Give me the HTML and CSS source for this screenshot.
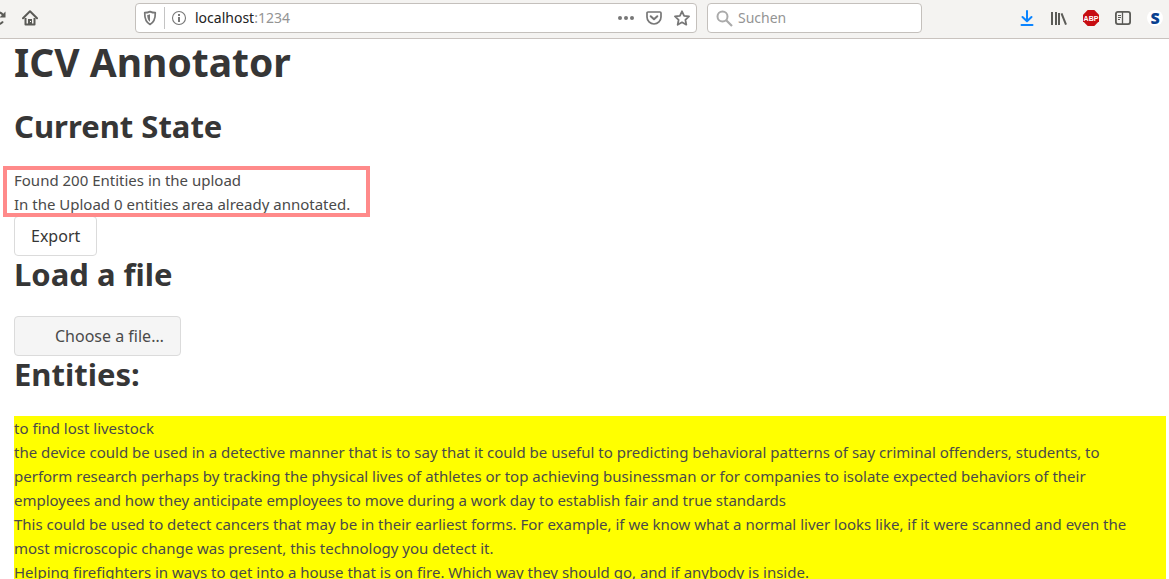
FILE: index.html
```
<!DOCTYPE html>
<html lang="en">
<head>
<meta charset="utf-8">
<title>ICV Annotator</title>
<link rel="stylesheet" href="styles.css">
</head>
<body>
<header class="toolbar">
  <button class="tool reload" aria-label="Reload"><svg width="16" height="16" viewBox="0 0 16 16" fill="none" stroke="#5b5b57" stroke-width="2"><path d="M13 11.500A6 6 0 1 1 13 5"/><path d="M15.500 1.500V7.500H9.500z" fill="#5b5b57" stroke="none"/></svg></button>
  <button class="tool home" aria-label="Home"><svg width="16" height="16" viewBox="0 0 16 16"><path d="M1 8.300L8 1.300l7 7" fill="none" stroke="#5b5b57" stroke-width="2" stroke-linecap="round" stroke-linejoin="round"/><path d="M3.500 8v6.500h9V8" fill="none" stroke="#5b5b57" stroke-width="2" stroke-linejoin="round"/><path d="M6 15V9h4v6z" fill="#5b5b57"/><path d="M8 11h1v1H8z" fill="#fff"/></svg></button>
  <div class="field address">
    <svg width="16" height="16" viewBox="0 0 16 16"><path d="M8 1.600c2 .9 3.700 1.100 5.300 1.100C13.400 8.500 12.500 12 8 14.400 3.500 12 2.600 8.500 2.700 2.700 4.300 2.700 6 2.500 8 1.600z" fill="none" stroke="#777" stroke-width="1.700" stroke-linejoin="round"/><path d="M8 4.300V11.800C5.800 10 5.300 8 5.200 5c1 0 2-.2 2.800-.7z" fill="#777"/></svg>
    <span class="divider"></span>
    <svg width="16" height="16" viewBox="0 0 16 16"><circle cx="8" cy="8" r="6.500" fill="none" stroke="#777" stroke-width="1.100"/><path d="M7 4h2v2H7zM7 7h2v5H7z" fill="#777"/></svg>
    <a class="url" href="#">localhost<span class="port">:1234</span></a>
    <div class="actions">
      <button class="tool" aria-label="Page actions"><svg width="16" height="16" viewBox="0 0 16 16" fill="#777"><circle cx="2" cy="8" r="2"/><circle cx="8" cy="8" r="2"/><circle cx="14" cy="8" r="2"/></svg></button>
      <button class="tool" aria-label="Save to Pocket"><svg width="16" height="16" viewBox="0 0 16 16" fill="none" stroke="#777" stroke-width="2" stroke-linecap="round" stroke-linejoin="round"><path d="M2 2h12a1 1 0 0 1 1 1v4a7 7 0 0 1-14 0V3a1 1 0 0 1 1-1z" stroke-width="1.700"/><path d="M4.700 6.200L8 9.300l3.300-3.100"/></svg></button>
      <button class="tool" aria-label="Bookmark"><svg width="16" height="16" viewBox="0 0 16 16"><path d="M8 1.300l2.100 4.500 4.900.6-3.600 3.400.9 4.900L8 12.300l-4.300 2.400.9-4.900L1 6.400l4.900-.6z" fill="none" stroke="#777" stroke-width="1.800" stroke-linejoin="round"/></svg></button>
    </div>
  </div>
  <label class="field search">
    <svg width="17" height="17" viewBox="0 0 17 17" fill="none" stroke="#aaa" stroke-width="2"><circle cx="6.500" cy="6.500" r="5"/><path d="M10.200 10.200L16 16" stroke-width="2.200"/></svg>
    <input class="query" type="text" placeholder="Suchen" aria-label="Suchen">
  </label>
  <nav class="extras">
    <button class="tool" aria-label="Downloads"><svg width="16" height="16" viewBox="0 0 16 16" fill="none" stroke="#0a84ff" stroke-width="2" stroke-linecap="round" stroke-linejoin="round"><path d="M8 1v10M3.500 7L8 11.300 12.500 7M2.500 15h11"/></svg></button>
    <button class="tool" aria-label="Library"><svg width="16" height="16" viewBox="0 0 16 16" fill="none" stroke="#5b5b57" stroke-width="2"><path d="M1 2v13M5 2v13M8 3v12"/><path d="M10.500 3.300L15 14.700"/></svg></button>
    <button class="tool" aria-label="Adblock Plus"><svg width="16" height="16" viewBox="0 0 16 16"><path d="M4.700 0h6.600L16 4.700v6.600L11.300 16H4.700L0 11.300V4.700z" fill="#c70d12"/><text class="abp" x="8" y="11" text-anchor="middle">ABP</text></svg></button>
    <button class="tool" aria-label="Sidebars"><svg width="16" height="16" viewBox="0 0 16 16" fill="none" stroke="#5b5b57"><rect x=".9" y="1.900" width="14.200" height="12.200" rx="2" stroke-width="1.800"/><path d="M7.500 2v12" stroke-width="1.300"/><path d="M3 5.500h3M3 7.500h3M3 9.500h2" stroke-width="1"/></svg></button>
    <button class="tool badge">S</button>
  </nav>
</header>
<main class="content">
  <h1 class="title">ICV Annotator</h1>
  <h2 class="subtitle">Current State</h2>
  <div class="status">
    <p>Found 200 Entities in the upload</p>
    <p>In the Upload 0 entities area already annotated.</p>
  </div>
  <button class="button">Export</button>
  <h2 class="subtitle">Load a file</h2>
  <button class="button file">Choose a file…</button>
  <h2 class="subtitle">Entities:</h2>
  <div class="entities">
    <p>to find lost livestock</p>
    <p>the device could be used in a detective manner that is to say that it could be useful to predicting behavioral patterns of say criminal offenders, students, to<br>perform research perhaps by tracking the physical lives of athletes or top achieving businessman or for companies to isolate expected behaviors of their<br>employees and how they anticipate employees to move during a work day to establish fair and true standards</p>
    <p>This could be used to detect cancers that may be in their earliest forms. For example, if we know what a normal liver looks like, if it were scanned and even the<br>most microscopic change was present, this technology you detect it.</p>
    <p>Helping firefighters in ways to get into a house that is on fire. Which way they should go, and if anybody is inside.</p>
  </div>
</main>
</body>
</html>
```
FILE: styles.css
```
* { box-sizing: border-box; }
html { height: 100%; overflow: hidden; }
body {
  margin: 0;
  background: #fff;
  color: #4a4a4a;
  font: 16px/24px "Noto Sans", sans-serif;
}
h1, h2, p { margin: 0; }
svg { display: block; flex: none; }
button, input { font: inherit; }

.toolbar {
  display: flex;
  align-items: center;
  height: 39px;
  padding-bottom: 2px;
  background: #f4f3f1;
  border-bottom: 1px solid #c9c3bf;
  font-size: 14px;
  line-height: 20px;
}
.tool { padding: 0; border: 0; background: none; }
.reload { margin-left: -10px; }
.home { margin-left: 16px; }
.field {
  display: flex;
  align-items: center;
  height: 30px;
  background: #fff;
  border: 1px solid #c4c0bc;
  border-radius: 4px;
}
.address {
  flex: 1;
  margin-left: 97px;
  padding: 0 6px;
}
.divider {
  width: 1px;
  height: 22px;
  margin: 0 6px;
  background: #c4c4c4;
}
.url { margin-left: 8px; color: #222; text-decoration: none; }
.port { color: #949494; }
.actions { display: flex; gap: 12px; margin-left: auto; }
.search {
  width: 215px;
  margin-left: 10px;
  padding: 0 8px;
  gap: 5px;
}
.query {
  flex: 1;
  min-width: 0;
  padding: 0;
  border: 0;
  outline: 0;
  background: none;
}
.query::placeholder { color: #949494; opacity: 1; }
.extras { display: flex; align-items: center; gap: 16px; margin: 0 6px 0 97px; }
.abp { fill: #fff; font: bold 7px "Liberation Sans", sans-serif; }
.badge {
  width: 16px;
  border-radius: 8px;
  background: #fff;
  color: #08408f;
  font: 800 16px/16px "Open Sans", sans-serif;
}

.content { padding: 0 3px 0 14px; }
.title {
  margin-bottom: 24px;
  color: #363636;
  font-size: 39px;
  font-weight: 700;
  line-height: 45px;
}
.subtitle {
  margin-bottom: 24px;
  color: #363636;
  font-size: 31px;
  font-weight: 700;
  line-height: 36px;
}
.status, .entities { font-size: 15px; }
.status { position: relative; width: fit-content; padding-right: 9px; }
.status::after {
  content: "";
  position: absolute;
  inset: -2px -11px -1px;
  border: 4px solid #ff8a8a;
  z-index: 1;
}
.button {
  display: block;
  height: 40px;
  padding: 0 16px;
  background: #fff;
  border: 1px solid #dbdbdb;
  border-radius: 4px;
  color: #363636;
}
.file { padding-left: 40px; background: #f5f5f5; color: #4a4a4a; }
.entities { background: #ff0; }
```
